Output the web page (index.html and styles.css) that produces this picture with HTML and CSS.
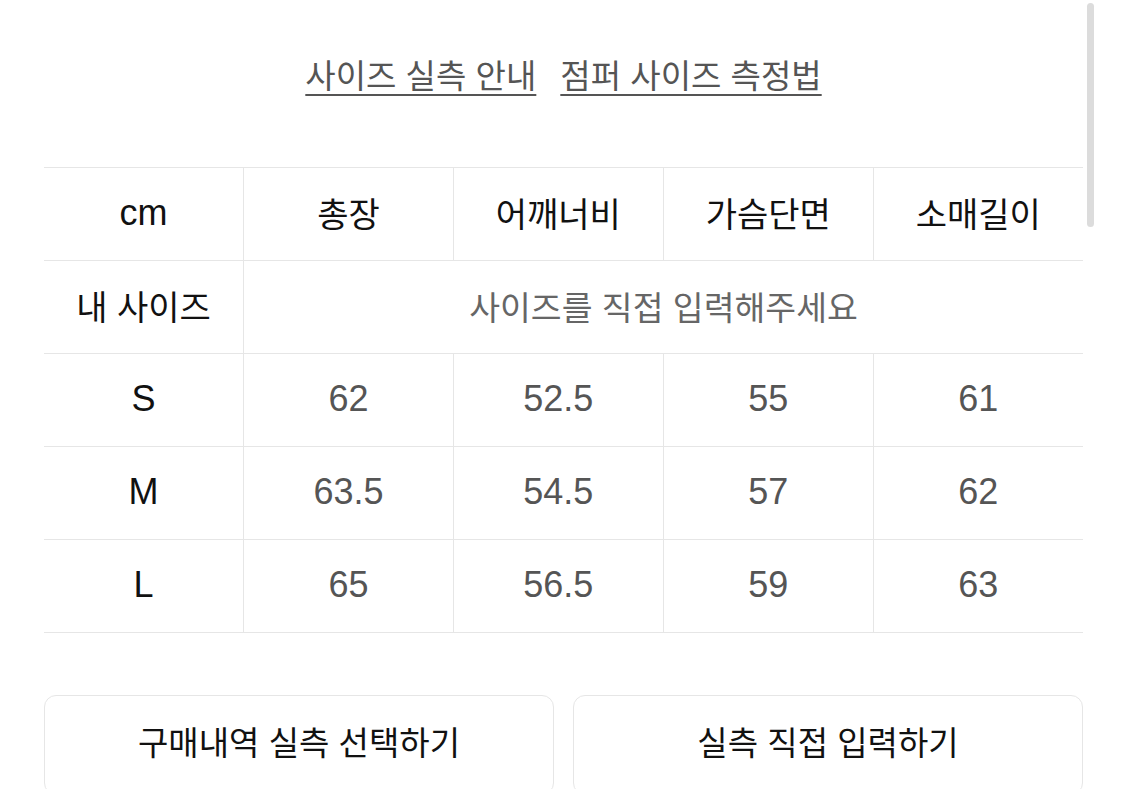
FILE: index.html
```html
<!DOCTYPE html>
<html lang="ko">
<head>
<meta charset="utf-8">
<link rel="stylesheet" href="styles.css">
</head>
<body>
<div class="page">
  <div class="links">
    <a class="link" href="#">사이즈 실측 안내</a>
    <a class="link" href="#">점퍼 사이즈 측정법</a>
  </div>
  <table class="size-table">
    <thead>
      <tr>
        <th class="unit">cm</th><th>총장</th><th>어깨너비</th><th>가슴단면</th><th>소매길이</th>
      </tr>
    </thead>
    <tbody>
      <tr class="mine">
        <th>내 사이즈</th>
        <td colspan="4" class="hint">사이즈를 직접 입력해주세요</td>
      </tr>
      <tr><th>S</th><td>62</td><td>52.5</td><td>55</td><td>61</td></tr>
      <tr><th>M</th><td>63.5</td><td>54.5</td><td>57</td><td>62</td></tr>
      <tr><th>L</th><td>65</td><td>56.5</td><td>59</td><td>63</td></tr>
    </tbody>
  </table>
  <div class="actions">
    <button class="btn">구매내역 실측 선택하기</button>
    <button class="btn">실측 직접 입력하기</button>
  </div>
</div>
<div class="scrollbar"></div>
</body>
</html>
```
FILE: styles.css
```css
html, body {
  margin: 0;
  padding: 0;
  background: #fff;
  height: 789px;
  overflow: hidden;
}
body {
  font-family: "Liberation Sans", "Noto Sans CJK KR", sans-serif;
  color: #222;
}
.page {
  padding: 0 42px 0 44px;
}
.links {
  display: flex;
  justify-content: center;
  gap: 24px;
  padding-top: 53px;
  height: 167px;
  box-sizing: border-box;
}
.link {
  font-family: "Noto Sans CJK KR", sans-serif;
  font-size: 33px;
  line-height: 42px;
  height: 42px;
  color: #555;
  text-decoration: underline;
  text-decoration-thickness: 2px;
  text-underline-offset: 6px;
}
.size-table {
  width: 100%;
  border-collapse: collapse;
  table-layout: fixed;
}
.size-table th, .size-table td {
  height: 89px;
  padding: 0 0 3px;
  text-align: center;
  vertical-align: middle;
  border-top: 1px solid #e6e6e6;
  border-bottom: 1px solid #e6e6e6;
  font-size: 36px;
}
.size-table th:first-child { width: 199px; }
.size-table th + th, .size-table td {
  border-left: 1px solid #e6e6e6;
}
.size-table th {
  font-weight: normal;
  color: #111;
}
.size-table thead th, .mine th {
  font-family: "Noto Sans CJK KR", sans-serif;
  font-size: 34px;
}
.size-table thead th.unit {
  font-family: "Liberation Sans", sans-serif;
  font-size: 36px;
}
.size-table td {
  color: #555;
}
.size-table td.hint {
  font-family: "Noto Sans CJK KR", sans-serif;
  font-size: 33.5px;
  color: #666;
}
.actions {
  display: flex;
  gap: 19px;
  margin-top: 62px;
}
.btn {
  flex: 1;
  height: 100px;
  background: #fff;
  border: 1px solid #e6e6e6;
  border-radius: 12px;
  font-family: "Noto Sans CJK KR", sans-serif;
  font-size: 33px;
  color: #111;
  padding: 0 0 8px;
}
.scrollbar {
  position: absolute;
  top: 3px;
  left: 1087px;
  width: 7px;
  height: 224px;
  border-radius: 4px;
  background: #dcdcdc;
}
```
